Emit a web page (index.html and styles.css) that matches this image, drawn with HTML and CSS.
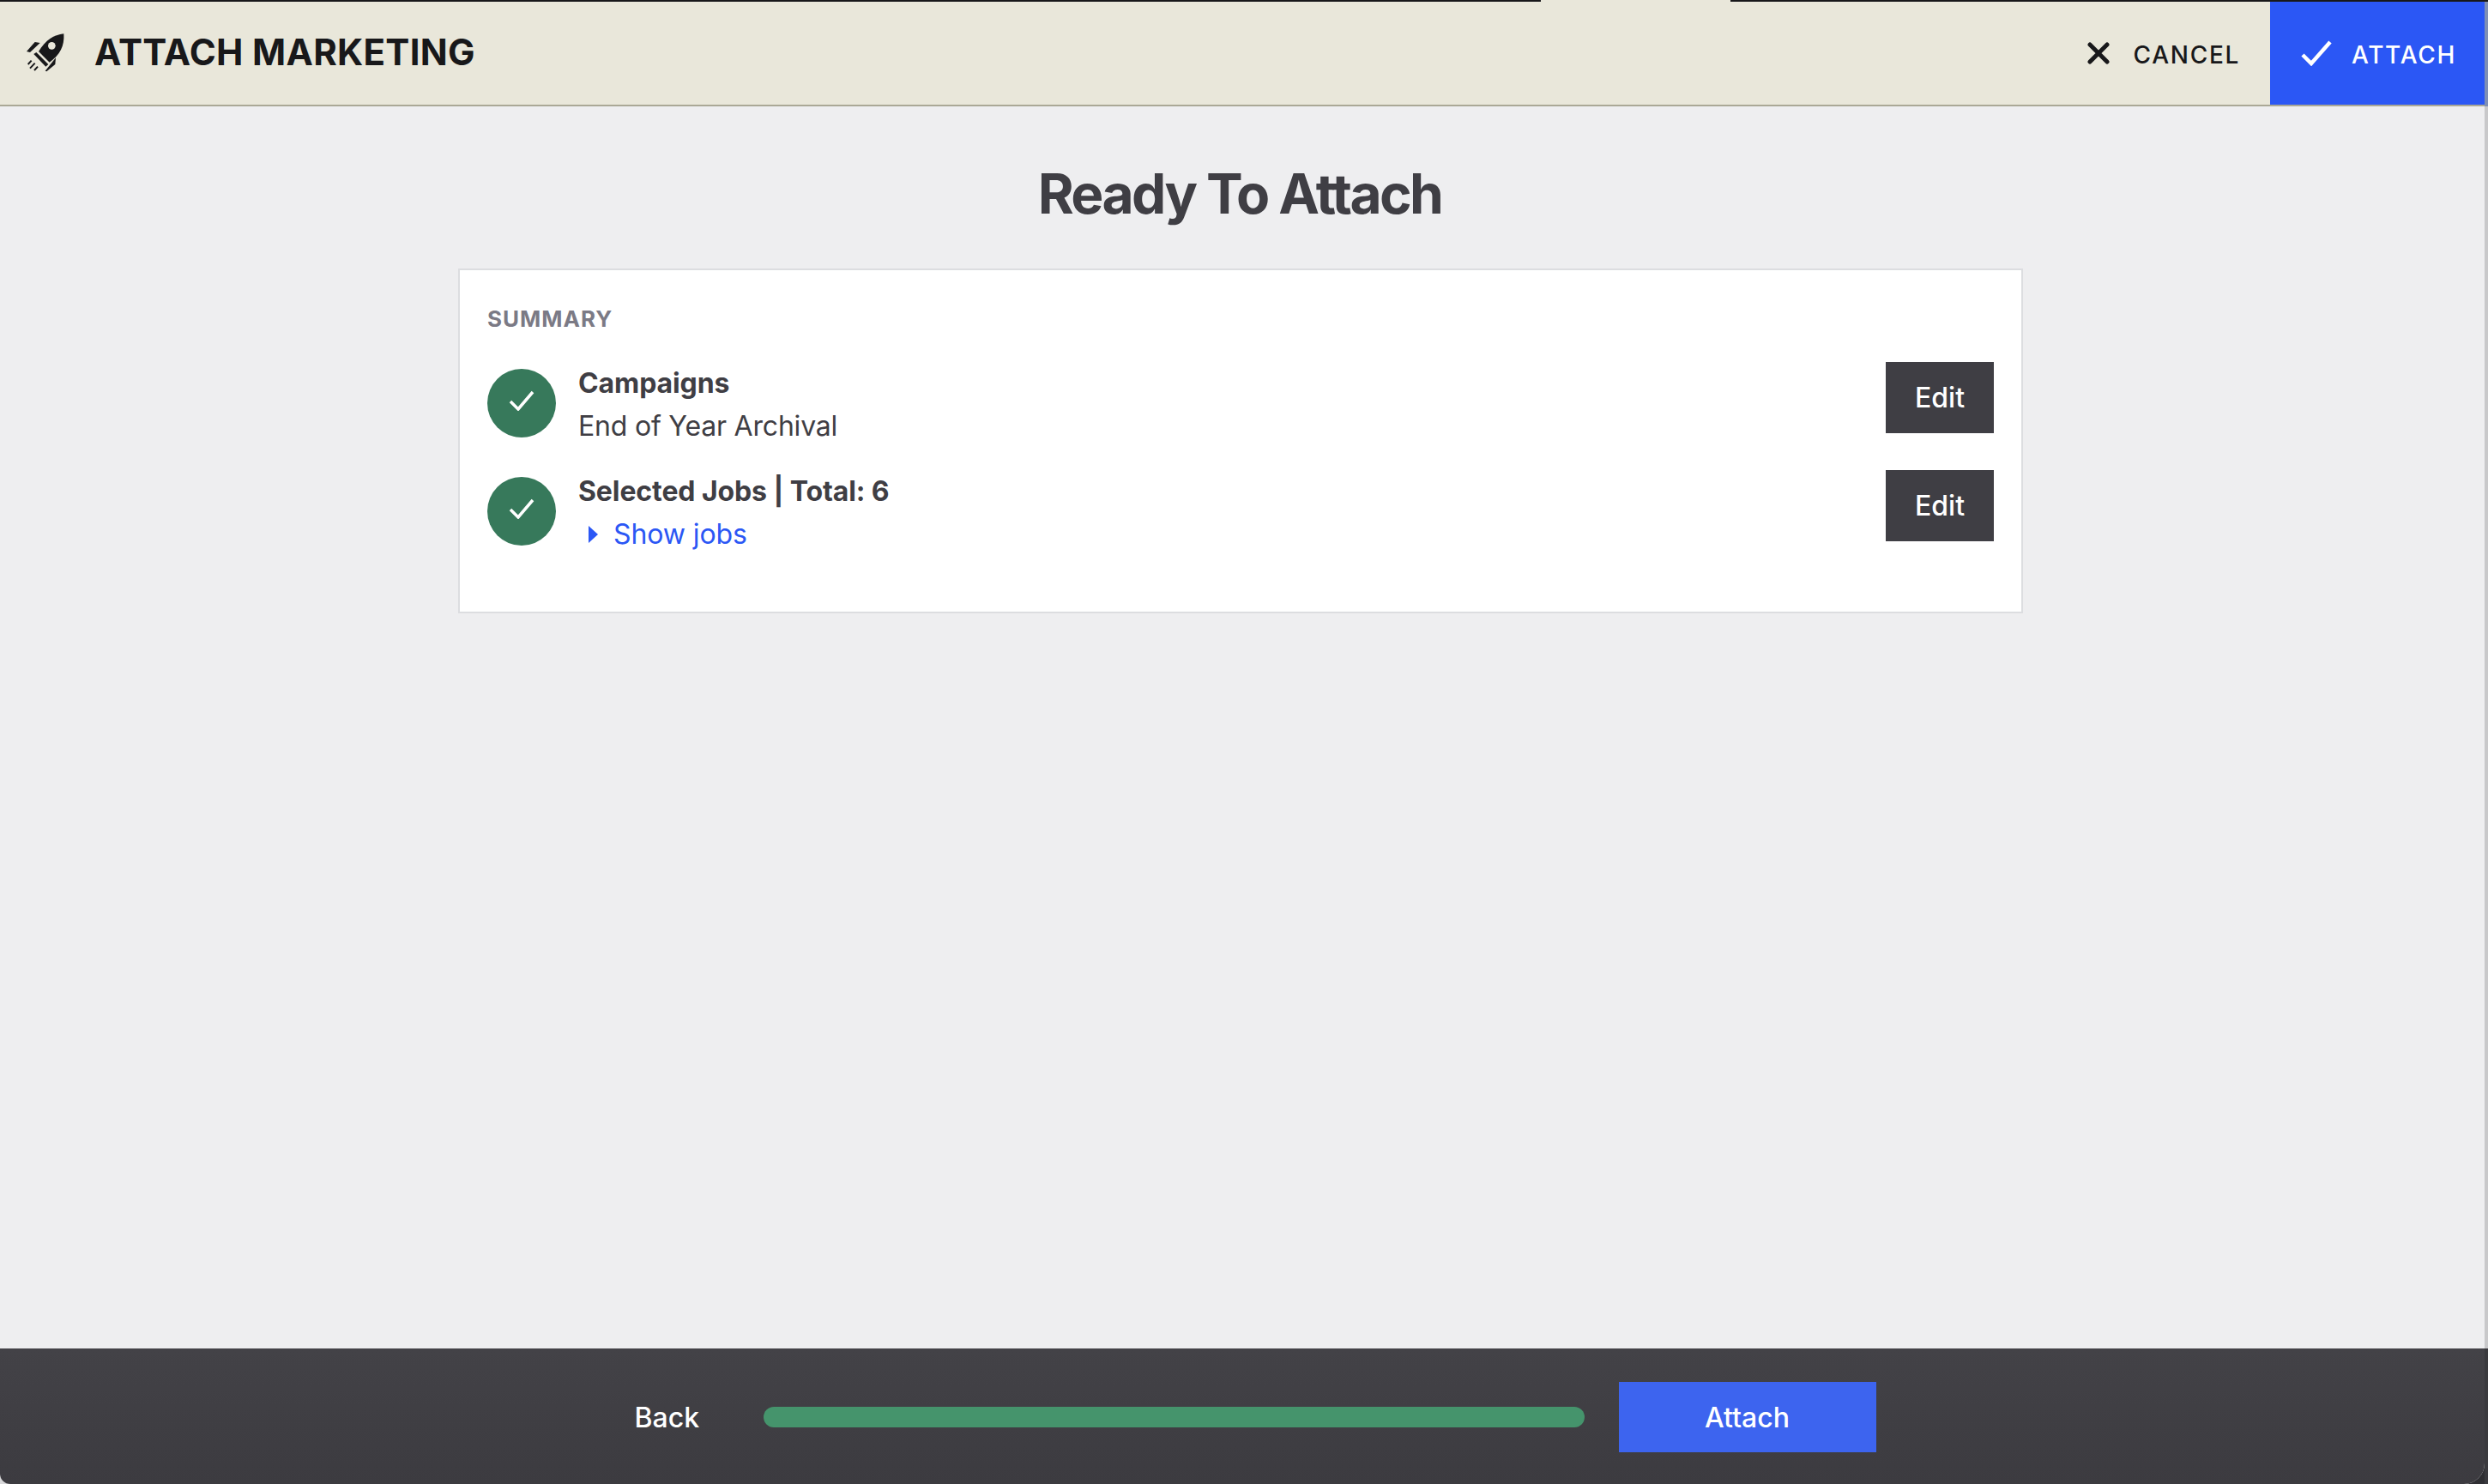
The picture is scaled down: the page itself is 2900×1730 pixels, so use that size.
FILE: index.html
```html
<!DOCTYPE html>
<html lang="en">
<head>
    <meta charset="UTF-8">
    <meta name="viewport" content="width=device-width, initial-scale=1.0">
    <title>Attach Marketing</title>
    <link rel="stylesheet" href="styles.css">
</head>
<body>
    <div class="window">
        <div class="topline">
            <span class="topline-left"></span>
            <span class="topline-notch"></span>
            <span class="topline-right"></span>
        </div>
        <header class="header">
            <div class="header-title">
                <svg class="rocket" viewBox="0 0 210 180" width="70" height="60">
                    <path d="M163 28C128 32 100 50 75 90L113 128C150 102 166 70 163 28Z" fill="#18181a"/>
                    <circle cx="121" cy="70" r="13" fill="#e9e7da"/>
                    <path d="M58 99L67 93L109 135L100 143Z" fill="#18181a"/>
                    <path d="M33 90L62 57L80 60L45 93Z" fill="#18181a"/>
                    <path d="M98 158L135 112L133 135L103 160Z" fill="#18181a"/>
                    <path d="M38 135L50 122M45 149L62 131M60 156L72 143" stroke="#18181a" stroke-width="6" fill="none"/>
                </svg>
                <h2>ATTACH MARKETING</h2>
            </div>
            <div class="header-actions">
                <a class="cancel-link">
                    <svg viewBox="0 0 26 26" width="26" height="26">
                        <path d="M3 3L23 23M23 3L3 23" stroke="#18181a" stroke-width="5" stroke-linecap="round" fill="none"/>
                    </svg>
                    <span>CANCEL</span>
                </a>
                <a class="attach-link">
                    <svg viewBox="0 0 36 30" width="36" height="30">
                        <path d="M2 17L12 27L34 2" stroke="#fff" stroke-width="4.5" fill="none"/>
                    </svg>
                    <span>ATTACH</span>
                </a>
            </div>
        </header>

        <main class="content">
            <h1>Ready To Attach</h1>
            <section class="card">
                <div class="card-label">SUMMARY</div>
                <div class="row">
                    <div class="row-check">
                        <svg viewBox="0 0 30 24" width="30" height="24">
                            <path d="M2 13L11 22L28 2" stroke="#fff" stroke-width="3.5" fill="none"/>
                        </svg>
                    </div>
                    <div class="row-text">
                        <div class="row-title">Campaigns</div>
                        <div class="row-sub">End of Year Archival</div>
                    </div>
                    <button class="edit-btn">Edit</button>
                </div>
                <div class="row">
                    <div class="row-check">
                        <svg viewBox="0 0 30 24" width="30" height="24">
                            <path d="M2 13L11 22L28 2" stroke="#fff" stroke-width="3.5" fill="none"/>
                        </svg>
                    </div>
                    <div class="row-text">
                        <div class="row-title">Selected Jobs | Total: 6</div>
                        <a class="show-jobs"><span class="caret"></span>Show jobs</a>
                    </div>
                    <button class="edit-btn">Edit</button>
                </div>
            </section>
        </main>

        <footer class="footer">
            <a class="back-link">Back</a>
            <div class="progress"></div>
            <button class="next-btn">Attach</button>
        </footer>
    </div>
    <div class="edge">
        <div class="edge-top"></div>
        <div class="edge-mid"></div>
        <div class="edge-bottom"></div>
    </div>
</body>
</html>
```

FILE: styles.css
```css
* { box-sizing: border-box; }
html, body {
    height: 100%;
}
body {
    margin: 0;
    font-family: 'Inter', 'Liberation Sans', sans-serif;
    color: #3f3e44;
    background: linear-gradient(to right, #d8d8da 50%, #2f2f33 50%);
    display: flex;
    height: 1730px;
    overflow: hidden;
}
.window {
    width: 2896px;
    display: flex;
    flex-direction: column;
    background-color: #eeeef0;
    border-radius: 0 0 24px 12px;
    overflow: hidden;
}
.edge {
    flex: 1;
    display: flex;
    flex-direction: column;
}
.edge-top {
    height: 124px;
    background-color: #7f8fb5;
    border-top: 2px solid #18181a;
}
.edge-mid {
    height: 1448px;
    background-color: #c8c8ca;
}
.edge-bottom {
    flex: 1;
    background-color: #3a3a3e;
}

.topline {
    display: flex;
    height: 2px;
}
.topline-left {
    width: 1796px;
    background-color: #18181a;
}
.topline-notch {
    width: 221px;
    background-color: #e9e7da;
}
.topline-right {
    flex: 1;
    background-color: #18181a;
}

.header {
    height: 122px;
    display: flex;
    justify-content: space-between;
    background-color: #e9e7da;
    border-bottom: 2px solid #aaa896;
}
.header-title {
    display: flex;
    align-items: center;
    padding-left: 20px;
    padding-bottom: 4px;
}
.rocket {
    margin-right: 20px;
}
.header-title h2 {
    margin: 0;
    font-size: 42px;
    font-weight: 700;
    letter-spacing: 0.3px;
    color: #18181a;
}
.header-actions {
    display: flex;
}
.cancel-link {
    display: flex;
    align-items: center;
    padding-right: 35px;
    gap: 28px;
    font-size: 28px;
    font-weight: 500;
    letter-spacing: 1.7px;
    color: #18181a;
}
.attach-link {
    width: 250px;
    display: flex;
    align-items: center;
    padding-left: 36px;
    gap: 23px;
    font-size: 28px;
    font-weight: 500;
    letter-spacing: 1.7px;
    color: #fff;
    background-color: #2b57f5;
}
.cancel-link span, .attach-link span {
    margin-top: 4px;
}

.content {
    flex: 1;
    padding: 0 4px 0 0;
    display: flex;
    flex-direction: column;
    align-items: center;
}
.content h1 {
    margin: 0 2px 0 0;
    padding-top: 64px;
    font-size: 64px;
    line-height: 76px;
    font-weight: 700;
    letter-spacing: -2.6px;
    color: #3f3e44;
}
.card {
    width: 1824px;
    height: 402px;
    margin-top: 49px;
    padding: 41px 32px 0;
    background-color: #fff;
    border: 2px solid #dcdde0;
}
.card-label {
    font-size: 26px;
    line-height: 32px;
    font-weight: 700;
    letter-spacing: 1px;
    color: #7b7a85;
    margin-bottom: 32px;
}
.row {
    display: flex;
    align-items: flex-start;
    margin-bottom: 24px;
    font-size: 32px;
    line-height: 50px;
}
.row-check {
    width: 80px;
    height: 80px;
    margin-top: 10px;
    margin-right: 26px;
    padding-bottom: 6px;
    border-radius: 50%;
    background-color: #37795b;
    display: flex;
    align-items: center;
    justify-content: center;
}
.row-text {
    flex: 1;
    margin-top: 2px;
}
.row-title {
    font-weight: 650;
    letter-spacing: -0.1px;
}
.row-sub {
    letter-spacing: -0.2px;
}
.show-jobs {
    display: flex;
    align-items: center;
    letter-spacing: -0.1px;
    color: #2b57f5;
}
.caret {
    width: 0;
    height: 0;
    margin-left: 12px;
    margin-right: 18px;
    border-top: 10px solid transparent;
    border-bottom: 10px solid transparent;
    border-left: 11px solid #2b57f5;
}
.edit-btn {
    width: 126px;
    height: 83px;
    margin-top: 2px;
    border: none;
    font-family: inherit;
    font-size: 32px;
    font-weight: 500;
    color: #fff;
    background-color: #3f3e44;
}

.footer {
    height: 158px;
    padding-top: 2px;
    display: flex;
    align-items: center;
    justify-content: center;
    background: linear-gradient(#434247, #3c3b40);
}
.back-link {
    width: 180px;
    padding-left: 30px;
    font-size: 32px;
    font-weight: 500;
    color: #fff;
}
.progress {
    width: 957px;
    height: 24px;
    margin-right: 40px;
    border-radius: 12px;
    background-color: #45946c;
}
.next-btn {
    width: 300px;
    height: 82px;
    border: none;
    font-family: inherit;
    font-size: 32px;
    font-weight: 500;
    color: #fff;
    background-color: #3d64ef;
}
```
